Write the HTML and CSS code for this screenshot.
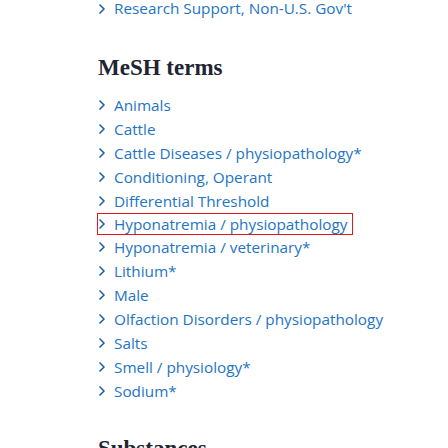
FILE: index.html
```html
<!DOCTYPE html>
<html>
<head>
<meta charset="utf-8">
<link rel="stylesheet" href="styles.css">
</head>
<body>
<div class="page">
  <ul class="terms first">
    <li><svg class="chev" viewBox="0 0 8 12"><polyline points="1.5,1.5 6,6 1.5,10.5"/></svg><a>Research Support, Non-U.S. Gov't</a></li>
  </ul>
  <h2 class="heading">MeSH terms</h2>
  <ul class="terms">
    <li><svg class="chev" viewBox="0 0 8 12"><polyline points="1.5,1.5 6,6 1.5,10.5"/></svg><a>Animals</a></li>
    <li><svg class="chev" viewBox="0 0 8 12"><polyline points="1.5,1.5 6,6 1.5,10.5"/></svg><a>Cattle</a></li>
    <li><svg class="chev" viewBox="0 0 8 12"><polyline points="1.5,1.5 6,6 1.5,10.5"/></svg><a>Cattle Diseases / physiopathology*</a></li>
    <li><svg class="chev" viewBox="0 0 8 12"><polyline points="1.5,1.5 6,6 1.5,10.5"/></svg><a>Conditioning, Operant</a></li>
    <li><svg class="chev" viewBox="0 0 8 12"><polyline points="1.5,1.5 6,6 1.5,10.5"/></svg><a>Differential Threshold</a></li>
    <li class="marked"><svg class="chev" viewBox="0 0 8 12"><polyline points="1.5,1.5 6,6 1.5,10.5"/></svg><a>Hyponatremia / physiopathology</a></li>
    <li><svg class="chev" viewBox="0 0 8 12"><polyline points="1.5,1.5 6,6 1.5,10.5"/></svg><a>Hyponatremia / veterinary*</a></li>
    <li><svg class="chev" viewBox="0 0 8 12"><polyline points="1.5,1.5 6,6 1.5,10.5"/></svg><a>Lithium*</a></li>
    <li><svg class="chev" viewBox="0 0 8 12"><polyline points="1.5,1.5 6,6 1.5,10.5"/></svg><a>Male</a></li>
    <li><svg class="chev" viewBox="0 0 8 12"><polyline points="1.5,1.5 6,6 1.5,10.5"/></svg><a>Olfaction Disorders / physiopathology</a></li>
    <li><svg class="chev" viewBox="0 0 8 12"><polyline points="1.5,1.5 6,6 1.5,10.5"/></svg><a>Salts</a></li>
    <li><svg class="chev" viewBox="0 0 8 12"><polyline points="1.5,1.5 6,6 1.5,10.5"/></svg><a>Smell / physiology*</a></li>
    <li><svg class="chev" viewBox="0 0 8 12"><polyline points="1.5,1.5 6,6 1.5,10.5"/></svg><a>Sodium*</a></li>
  </ul>
  <h2 class="heading next">Substances</h2>
</div>
</body>
</html>
```
FILE: styles.css
```css
html, body {
  margin: 0;
  padding: 0;
  background: #fff;
  overflow: hidden;
  height: 448px;
}
.page {
  padding-left: 98px;
}
.terms {
  list-style: none;
  margin: 11px 0 0 0;
  padding: 0;
  font-family: "Open Sans", "Noto Sans", sans-serif;
  font-size: 15.3px;
  line-height: 24px;
  color: #2474c4;
}
.terms li {
  display: flex;
  align-items: center;
  height: 24px;
  white-space: nowrap;
}
.terms.first {
  margin-top: 0;
}
.terms.first li {
  height: 17px;
  line-height: 17px;
}
.chev {
  width: 8px;
  height: 12px;
  margin-right: 8px;
  flex: none;
}
.chev polyline {
  fill: none;
  stroke: #1d5fa8;
  stroke-width: 1.5;
}
.terms a {
  color: #2474c4;
}
.terms li.marked {
  box-sizing: border-box;
  width: 256px;
  height: 22px;
  margin-left: -1px;
  padding-left: 0;
  border: 1.5px solid #e8141c;
  overflow: hidden;
}
.heading {
  font-family: "Liberation Serif", "DejaVu Serif", serif;
  font-weight: bold;
  font-size: 23px;
  line-height: 28px;
  color: #212433;
  margin: 37px 0 0 0;
}
.heading.next {
  margin-top: 32px;
}
```
